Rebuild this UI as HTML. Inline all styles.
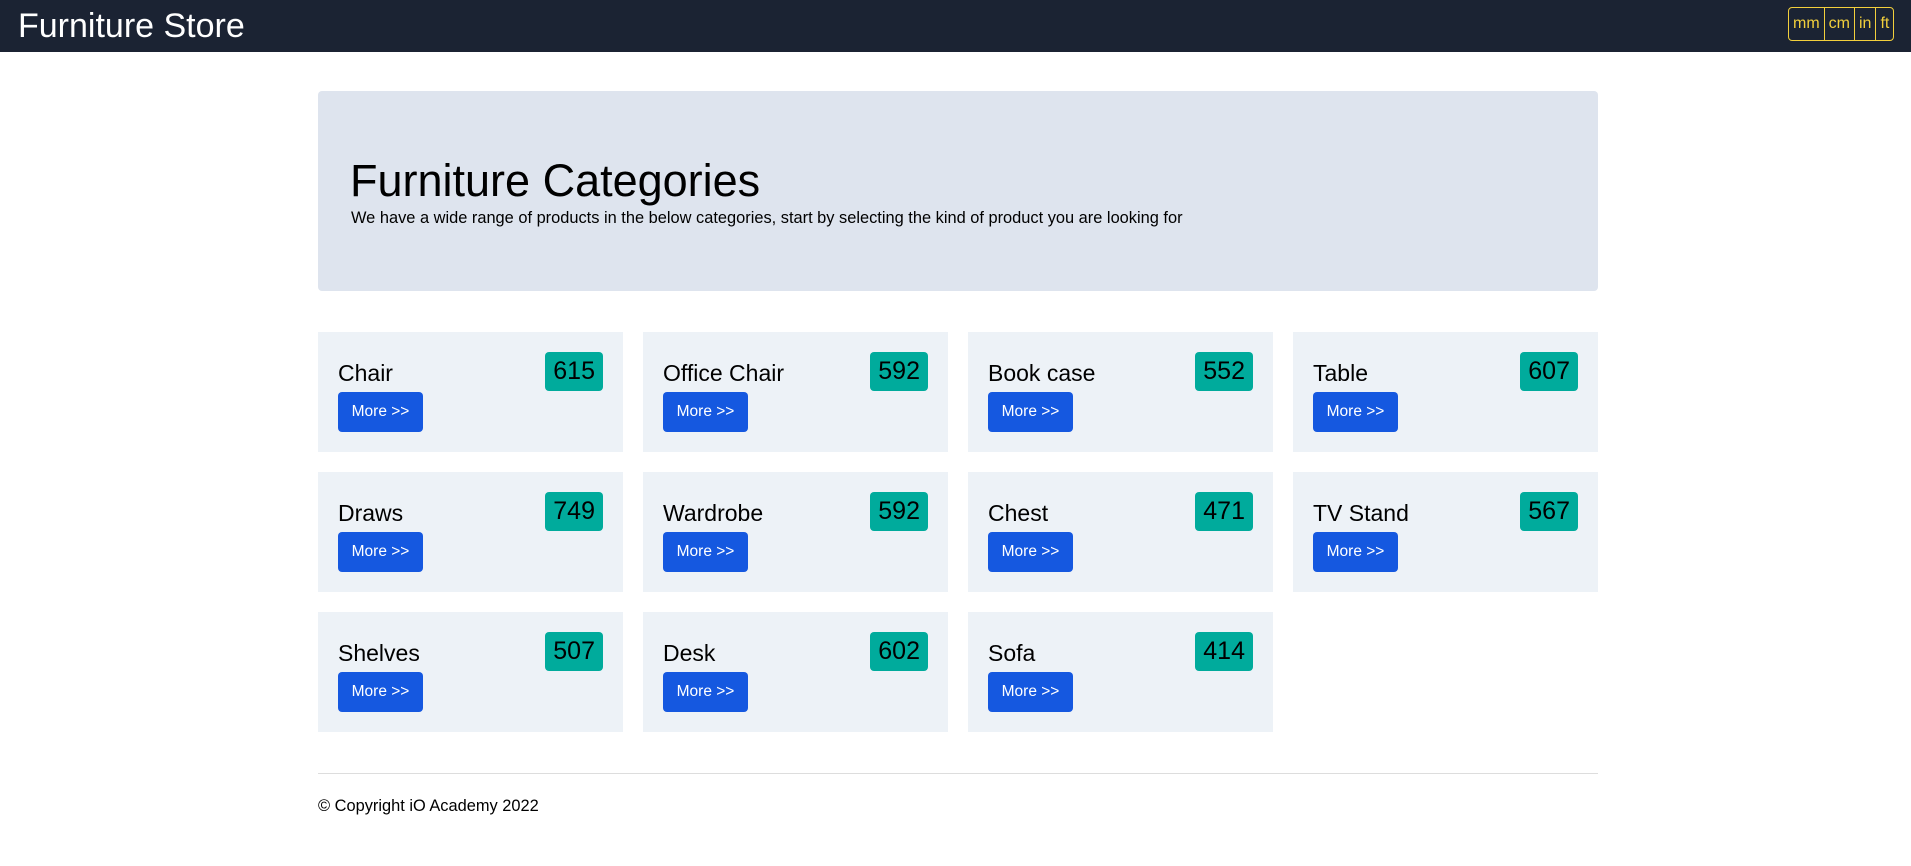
<!DOCTYPE html>
<html><head><meta charset="utf-8"><style>
*{box-sizing:border-box;margin:0;padding:0}
body{width:1911px;height:866px;background:#fff;font-family:"Liberation Sans",sans-serif;color:#000;position:relative;overflow:hidden}
.nav{position:absolute;left:0;top:0;width:1911px;height:52px;background:#1b2333}
.nav h1{position:absolute;left:18px;top:4px;font-size:34px;font-weight:400;color:#fff;line-height:44px}
.units{position:absolute;left:1788px;top:7px;height:34px;display:flex;border:1.5px solid #f2cf3c;border-radius:4px}
.units span{color:#f2cf3c;font-size:16px;line-height:31px;padding:0 3px;border-left:1.5px solid #f2cf3c}
.units span:first-child{border-left:none}
.jumbo{position:absolute;left:318px;top:91px;width:1280px;height:200px;background:#dee4ee;border-radius:4px}
.jumbo h2{position:absolute;left:32px;top:64px;font-size:45px;font-weight:400;line-height:52px;white-space:nowrap}
.jumbo p{position:absolute;left:33px;top:118px;font-size:16.4px;line-height:18px;white-space:nowrap}
.card{position:absolute;width:305px;height:120px;background:#edf2f7}
.card .t{position:absolute;left:20px;top:27px;font-size:23px;line-height:28px}
.card .b{position:absolute;right:20px;top:20px;height:39px;padding:0 8px;background:#00ab9c;border-radius:4px;font-size:25px;line-height:39px}
.card .m{position:absolute;left:20px;top:60px;width:85px;height:40px;background:#1558e0;border-radius:4px;color:#fff;font-size:15.5px;line-height:40px;text-align:center}
hr{position:absolute;left:318px;top:773px;width:1280px;border:none;border-top:1px solid #ddd}
.foot{position:absolute;left:318px;top:797px;font-size:16.4px;line-height:18px}
</style></head><body>
<div class="nav"><h1>Furniture Store</h1>
<div class="units"><span style="padding:0 4px">mm</span><span style="padding:0 4px">cm</span><span style="padding:0 4px">in</span><span style="padding:0 4px">ft</span></div></div>
<div class="jumbo"><h2>Furniture Categories</h2><p>We have a wide range of products in the below categories, start by selecting the kind of product you are looking for</p></div>

<div class="card" style="left:318px;top:332px"><div class="t">Chair</div><div class="b">615</div><div class="m">More &gt;&gt;</div></div>
<div class="card" style="left:643px;top:332px"><div class="t">Office Chair</div><div class="b">592</div><div class="m">More &gt;&gt;</div></div>
<div class="card" style="left:968px;top:332px"><div class="t">Book case</div><div class="b">552</div><div class="m">More &gt;&gt;</div></div>
<div class="card" style="left:1293px;top:332px"><div class="t">Table</div><div class="b">607</div><div class="m">More &gt;&gt;</div></div>

<div class="card" style="left:318px;top:472px"><div class="t">Draws</div><div class="b">749</div><div class="m">More &gt;&gt;</div></div>
<div class="card" style="left:643px;top:472px"><div class="t">Wardrobe</div><div class="b">592</div><div class="m">More &gt;&gt;</div></div>
<div class="card" style="left:968px;top:472px"><div class="t">Chest</div><div class="b">471</div><div class="m">More &gt;&gt;</div></div>
<div class="card" style="left:1293px;top:472px"><div class="t">TV Stand</div><div class="b">567</div><div class="m">More &gt;&gt;</div></div>

<div class="card" style="left:318px;top:612px"><div class="t">Shelves</div><div class="b">507</div><div class="m">More &gt;&gt;</div></div>
<div class="card" style="left:643px;top:612px"><div class="t">Desk</div><div class="b">602</div><div class="m">More &gt;&gt;</div></div>
<div class="card" style="left:968px;top:612px"><div class="t">Sofa</div><div class="b">414</div><div class="m">More &gt;&gt;</div></div>

<hr>
<div class="foot">© Copyright iO Academy 2022</div>
</body></html>
